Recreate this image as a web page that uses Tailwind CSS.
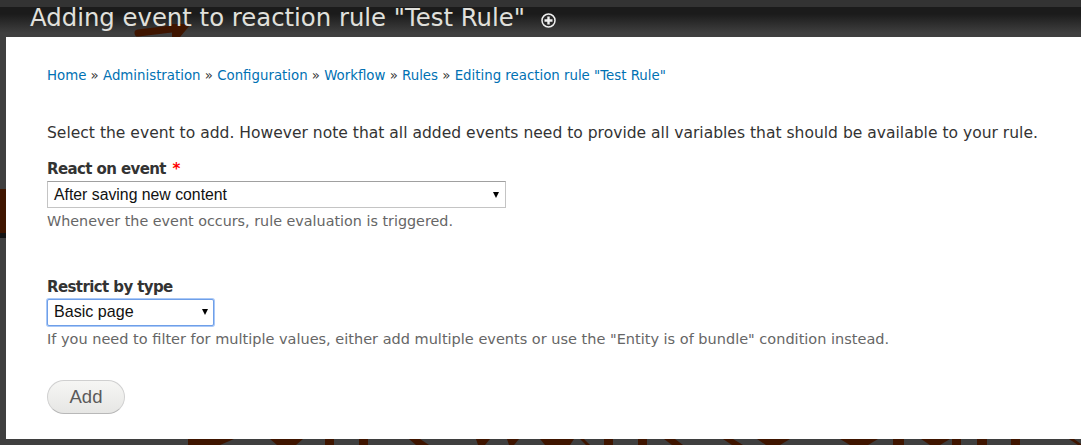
<!DOCTYPE html>
<html>
<head>
    <meta charset="UTF-8">
    <title>Adding event to reaction rule</title>
    <script src="https://cdn.jsdelivr.net/npm/@tailwindcss/browser@4"></script>
</head>
<body class="w-[1081px] h-[445px] overflow-hidden bg-[#3f3f3f] font-['DejaVu_Sans',sans-serif]">

    <!-- Overlay header -->
    <div class="h-[37px] relative overflow-hidden bg-[linear-gradient(#1b1b1b_7px,#3f3f3f_26px)] border-t-[7px] border-[#333333]">
        <!-- Brush stroke of the page behind the overlay -->
        <svg class="absolute left-[130px] top-[-7px]" width="70" height="37" viewBox="0 0 70 37">
            <path d="M8 33 L50 28" stroke="#3f1500" stroke-width="7" stroke-linecap="round" fill="none"/>
            <path d="M42 24 L61 24 L50 37 L42 37 Z" fill="#3f1500"/>
        </svg>
        <h1 class="relative flex items-center pl-[30px] h-[22px] text-[24.35px] leading-[22px] text-[#e0e0dc] whitespace-nowrap">
            Adding event to reaction rule "Test Rule"
            <svg class="ml-[16px] mt-[4px]" width="15" height="15" viewBox="0 0 15 15">
                <circle cx="7.5" cy="7.5" r="6.5" fill="#2a2a2a" stroke="#f0f0f0" stroke-width="1.5"/>
                <path d="M7.5 3.5v8M3.5 7.5h8" stroke="#f0f0f0" stroke-width="2.4"/>
            </svg>
        </h1>
    </div>

    <div class="flex h-[402px]">
        <!-- Strip left of the panel -->
        <div class="w-[6px] shrink-0 pt-[152px]">
            <div class="h-[44px] bg-[#3f1500]"></div>
            <div class="h-[5px] bg-[#141414]"></div>
        </div>

        <!-- Overlay content -->
        <div class="flex-1 bg-white pl-[41px] pt-[30px]">
            <div class="text-[13.33px] leading-[18px] text-[#333333] whitespace-nowrap">
                <a class="text-[#0071b3]">Home</a> » <a class="text-[#0071b3]">Administration</a> » <a class="text-[#0071b3]">Configuration</a> » <a class="text-[#0071b3]">Workflow</a> » <a class="text-[#0071b3]">Rules</a> » <a class="text-[#0071b3]">Editing reaction rule "Test Rule"</a>
            </div>

            <p class="mt-[38px] text-[15.56px] leading-[20px] text-[#333333] whitespace-nowrap">Select the event to add. However note that all added events need to provide all variables that should be available to your rule.</p>

            <div class="mt-[16px]">
                <label class="block text-[15px] tracking-[-0.6px] leading-[20px] font-bold text-[#333333]">React on event <span class="ml-[2px] text-[#ff0000]">*</span></label>
                <div class="mt-[2px] w-[459px] h-[27px] flex items-center justify-between pl-[6px] pr-[6px] border border-t-[#a0a0a0] border-x-[#c4c4c4] border-b-[#c4c4c4] bg-white font-['Liberation_Sans',sans-serif] text-[15.8px] text-[#111111]">
                    <span>After saving new content</span>
                    <span class="w-0 h-0 border-x-[3.5px] border-x-transparent border-t-[6px] border-t-black"></span>
                </div>
                <p class="mt-[4px] text-[14.34px] leading-[19px] text-[#666666]">Whenever the event occurs, rule evaluation is triggered.</p>
            </div>

            <div class="mt-[46px]">
                <label class="block text-[15px] tracking-[-0.6px] leading-[20px] font-bold text-[#333333]">Restrict by type</label>
                <div class="mt-[2px] w-[167px] h-[27px] flex items-center justify-between pl-[6px] pr-[5px] pb-[2px] border border-[#6f9fe8] rounded-[2px] shadow-[0_0_0_1px_#a9c8f7] bg-white font-['Liberation_Sans',sans-serif] text-[16.1px] text-[#111111]">
                    <span>Basic page</span>
                    <span class="w-0 h-0 border-x-[3.5px] border-x-transparent border-t-[6px] border-t-black"></span>
                </div>
                <p class="mt-[4px] text-[14.5px] leading-[19px] text-[#666666] whitespace-nowrap">If you need to filter for multiple values, either add multiple events or use the "Entity is of bundle" condition instead.</p>
            </div>

            <button class="block mt-[31px] w-[78px] h-[34px] rounded-[17px] border border-[#d0d0d0] border-b-[#b8b8b8] bg-[linear-gradient(#f6f6f4,#e6e6e4)] font-['Liberation_Sans',sans-serif] text-[18.5px] text-[#5a5a5a]">Add</button>
        </div>
    </div>

    <!-- Strip below the panel: letters of the page behind the overlay -->
    <svg class="block" width="1081" height="6" viewBox="0 0 1081 6" fill="#3f1500">
        <path d="M188 0H234L220 6H188Z"/>
        <path d="M270 0H303L296 6H277Z"/>
        <path d="M325 0H334V6H325Z"/>
        <path d="M359 0H368V6H359Z"/>
        <path d="M409 0H420L429 6H416Z"/>
        <path d="M476 0H490L485 6H478Z"/>
        <path d="M507 0H519L514 6H509Z"/>
        <path d="M540 0H574L570 6H545Z"/>
        <path d="M580 0H584L590 6H586Z"/>
        <path d="M604 0H613V6H604Z"/>
        <path d="M638 0H647V6H638Z"/>
        <path d="M664 0H675L683 6H672Z"/>
        <path d="M723 0H733L743 6H732Z"/>
        <path d="M757 0H790L780 6H766Z"/>
        <path d="M840 0H878L868 6H850Z"/>
        <path d="M893 0H904V6H893Z"/>
        <path d="M921 0H950L940 6H930Z"/>
        <path d="M952 0H961V6H952Z"/>
        <path d="M977 0H987V6H977Z"/>
        <path d="M1011 0H1020V6H1011Z"/>
        <path d="M1069 0H1074L1081 5V6H1078Z"/>
    </svg>

</body>
</html>
